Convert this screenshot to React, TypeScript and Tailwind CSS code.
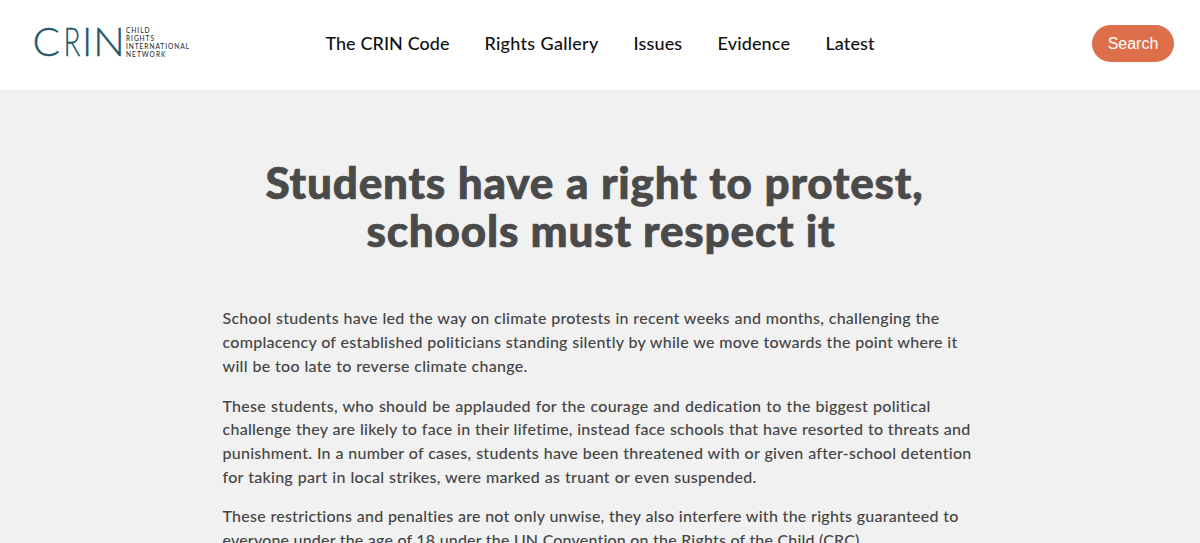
import clsx from "clsx";

interface Line {
  text: string;
  width: string;
}

const navItems = [
  { label: "The CRIN Code", width: "w-[124px] tracking-[0px]" },
  { label: "Rights Gallery", width: "w-[114px] tracking-[0.25px]" },
  { label: "Issues", width: "w-[49px] tracking-[0.15px]" },
  { label: "Evidence", width: "w-[73px] tracking-[0.15px]" },
  { label: "Latest", width: "w-[49px] tracking-[0.1px]" },
];

const paragraphs: Line[][] = [
  [
    { text: "School students have led the way on climate protests in recent weeks and months, challenging the", width: "w-[717px]" },
    { text: "complacency of established politicians standing silently by while we move towards the point where it", width: "w-[735px]" },
    { text: "will be too late to reverse climate change.", width: "w-[305px]" },
  ],
  [
    { text: "These students, who should be applauded for the courage and dedication to the biggest political", width: "w-[708px]" },
    { text: "challenge they are likely to face in their lifetime, instead face schools that have resorted to threats and", width: "w-[748px]" },
    { text: "punishment. In a number of cases, students have been threatened with or given after-school detention", width: "w-[749px]" },
    { text: "for taking part in local strikes, were marked as truant or even suspended.", width: "w-[534px]" },
  ],
  [
    { text: "These restrictions and penalties are not only unwise, they also interfere with the rights guaranteed to", width: "w-[736px] tracking-[0.24px]" },
    { text: "everyone under the age of 18 under the UN Convention on the Rights of the Child (CRC).", width: "w-[641px] tracking-[0.18px]" },
  ],
];

function Logo() {
  return (
    <svg width="168" height="60" viewBox="28 12 168 60" className="font-[Lato,sans-serif]" aria-label="CRIN">
      <g fill="#1d5868" stroke="#1d5868" strokeWidth="0.3" fontSize="39.5" fontWeight="300">
        <text x="32.6" y="56" textLength="27.5" lengthAdjust="spacingAndGlyphs">C</text>
        <text x="63.5" y="56" textLength="17" lengthAdjust="spacingAndGlyphs">R</text>
        <text x="82" y="56">I</text>
        <text x="93" y="56" textLength="32" lengthAdjust="spacingAndGlyphs">N</text>
      </g>
      <g fill="#2b3338" fontSize="6.6" fontWeight="500">
        <text x="126" y="33.2" textLength="23.5">CHILD</text>
        <text x="126" y="41" textLength="28">RIGHTS</text>
        <text x="126" y="48.7" textLength="63">INTERNATIONAL</text>
        <text x="126" y="56.5" textLength="39.5">NETWORK</text>
      </g>
    </svg>
  );
}

export default function App() {
  return (
    <div className="h-[543px] overflow-hidden bg-[#f1f1f1] font-[Lato,sans-serif]">
      <header className="flex h-[90px] items-start justify-between bg-white pl-7 pr-[26px] pt-3">
        <div className="w-[298px]">
          <Logo />
        </div>
        <nav className="flex gap-[35px] pt-[17px]">
          {navItems.map((item) => (
            <a
              key={item.label}
              href="#"
              className={clsx("whitespace-nowrap text-[18px] leading-7 font-medium text-[#111] [text-align-last:justify]", item.width)}
            >
              {item.label}
            </a>
          ))}
        </nav>
        <div className="flex w-[300px] justify-end">
          <button className="mt-[13px] h-[37px] w-[82px] rounded-full bg-[#de6f4b] font-['Liberation_Sans',sans-serif] text-base text-white">
            Search
          </button>
        </div>
      </header>

      <main className="pt-[68px]">
        <h1 className="flex flex-col items-center text-[44px] leading-[48px] font-black tracking-[0.8px] text-[#4a4a4a] [-webkit-text-stroke:0.7px_#4a4a4a]">
          <span className="mr-[11px] w-[658px] whitespace-nowrap [text-align-last:justify]">Students have a right to protest,</span>
          <span className="w-[467px] whitespace-nowrap [text-align-last:justify]">schools must respect it</span>
        </h1>

        <div className="mx-auto mt-[52.4px] flex w-[755px] flex-col gap-4 text-[16px] leading-[23.7px] font-medium tracking-[0.27px] text-[#444]">
          {paragraphs.map((lines, i) => (
            <p key={i}>
              {lines.map((line) => (
                <span key={line.text} className={clsx("block whitespace-nowrap [text-align-last:justify]", line.width)}>
                  {line.text}
                </span>
              ))}
            </p>
          ))}
        </div>
      </main>
    </div>
  );
}
